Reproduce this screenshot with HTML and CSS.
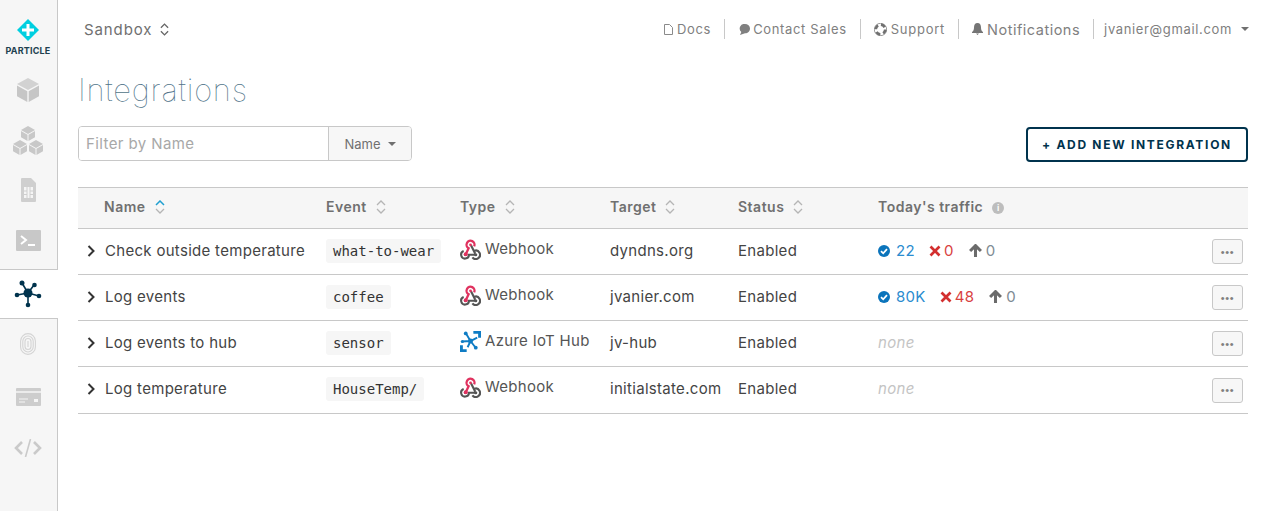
FILE: index.html
```html
<!DOCTYPE html>
<html lang="en">
<head>
    <meta charset="UTF-8">
    <meta name="viewport" content="width=device-width, initial-scale=1.0">
    <title>Integrations</title>
    <link rel="stylesheet" href="styles.css">
</head>
<body>
    <svg class="defs" width="0" height="0" aria-hidden="true">
        <symbol id="webhook" viewBox="0 0 20 20">
            <path d="M10.500 6 14.500 14" fill="none" stroke="#555" stroke-width="2"/>
            <path d="M13.500 11.300A4 4 0 1 1 11.800 17.400" fill="none" stroke="#555" stroke-width="2"/>
            <path d="M15 15H8.500A3.700 3.700 0 1 1 3.500 11.500" fill="none" stroke="#555" stroke-width="2"/>
            <circle cx="15" cy="15" r="1.500" fill="#555"/>
            <circle cx="5" cy="15" r="1.300" fill="#555"/>
            <path d="M5.500 14.500 8.200 8.800A3.800 3.800 0 1 1 13.500 7" fill="none" stroke="#e0325f" stroke-width="2.200"/>
            <circle cx="5.500" cy="14.500" r="1.900" fill="#e0325f"/>
            <circle cx="10" cy="5.500" r="1.300" fill="#e0325f"/>
        </symbol>
        <symbol id="azure" viewBox="0 0 22 22">
            <path d="M0 15h3v4h4v3H0zM14 0h8v7h-3V3h-5z" fill="#0f7cc4"/>
            <path d="M2 11 11 10.500M6 2 11 10.500 8 17M11 10.500 18 7M11 10.500 16 17" fill="none" stroke="#0f7cc4" stroke-width="2"/>
            <circle cx="11" cy="10.500" r="2.600" fill="#0f7cc4"/>
            <circle cx="6" cy="2.500" r="2" fill="#0f7cc4"/>
            <circle cx="16.500" cy="17.500" r="2" fill="#0f7cc4"/>
            <circle cx="2.500" cy="11" r="1.700" fill="#0f7cc4"/>
        </symbol>
        <symbol id="check" viewBox="0 0 12 12">
            <circle cx="6" cy="6" r="6" fill="#0b74bb"/>
            <path d="M3 6.200 5.200 8.300 9 4.200" fill="none" stroke="#fff" stroke-width="1.800"/>
        </symbol>
        <symbol id="cross" viewBox="0 0 12 12">
            <path d="M1.500 1.500 10.500 10.500M10.500 1.500 1.500 10.500" stroke="#d32f2f" stroke-width="2.700"/>
        </symbol>
        <symbol id="up" viewBox="0 0 12 12">
            <path d="M6 12V2M1 6.500 6 1.500 11 6.500" fill="none" stroke="#6b6b6b" stroke-width="2.800"/>
        </symbol>
        <symbol id="sort" viewBox="0 0 10 14">
            <path d="M1 5 5 1 9 5M1 9 5 13 9 9" fill="none" stroke="#b5b5b5" stroke-width="1.300"/>
        </symbol>
        <symbol id="sort-up" viewBox="0 0 10 14">
            <path d="M1 5 5 1 9 5" fill="none" stroke="#1f9fd0" stroke-width="1.500"/>
            <path d="M1 9 5 13 9 9" fill="none" stroke="#b5b5b5" stroke-width="1.300"/>
        </symbol>
        <symbol id="expand" viewBox="0 0 9 12">
            <path d="M1.500 1 6.500 6 1.500 11" fill="none" stroke="#333" stroke-width="2"/>
        </symbol>
    </svg>

    <div class="app">
        <nav class="sidebar">
            <div class="logo">
                <svg width="22" height="22" viewBox="0 0 22 22"><path d="M11 0 22 11 11 22 0 11z" fill="#00cfe0"/><path d="M9.500 5h3v4.500H17v3h-4.500V17h-3v-4.500H5v-3h4.500z" fill="#fff"/></svg>
                <span>PARTICLE</span>
            </div>
            <a class="nav-item">
                <svg width="22" height="24" viewBox="0 0 22 24"><path d="M11 0 22 6 11 12 0 6z" fill="#d2d2d2"/><path d="M0 7.500 10.300 13.200V24L0 18.300zM22 7.500 11.700 13.200V24L22 18.300z" fill="#c6c6c6"/></svg>
            </a>
            <a class="nav-item">
                <svg width="30" height="29" viewBox="0 0 30 29"><g fill="#c8c8c8"><path d="M15 0 22 4 15 8 8 4zM8 5 14.500 8.700V15L8 11.300zM22 5 15.500 8.700V15L22 11.300z"/><path d="M7 14 14 18 7 22 0 18zM0 19 6.500 22.700V29L0 25.300zM14 19 7.500 22.700V29L14 25.300z"/><path d="M23 14 30 18 23 22 16 18zM16 19 22.500 22.700V29L16 25.300zM30 19 23.500 22.700V29L30 25.300z"/></g></svg>
            </a>
            <a class="nav-item">
                <svg width="15" height="24" viewBox="0 0 15 24"><path d="M0 1a1 1 0 0 1 1-1h9l5 5v18a1 1 0 0 1-1 1H1a1 1 0 0 1-1-1z" fill="#cfcfcf"/><path d="M3 9h9v11H3z" fill="#f5f5f5"/><path d="M6 9v11M9 9v11M3 13h3M9 13h3M3 16.500h3M9 16.500h3" stroke="#cfcfcf"/></svg>
            </a>
            <a class="nav-item">
                <svg width="25" height="21" viewBox="0 0 25 21"><rect width="25" height="21" rx="1" fill="#c8c8c8"/><path d="M5 6 10 10 5 14" fill="none" stroke="#fff" stroke-width="2"/><path d="M12 15h7" stroke="#fff" stroke-width="2"/></svg>
            </a>
            <a class="nav-item active">
                <svg width="28" height="28" viewBox="0 0 28 28"><g stroke="#00334d" stroke-width="1.600"><path d="M14 13 8 3M14 13 20 5M14 13 3 15M14 13 25 16M14 13V25"/></g><g fill="#00334d"><circle cx="14" cy="13" r="4.500"/><circle cx="8" cy="3" r="2.500"/><circle cx="20.500" cy="5" r="2.300"/><circle cx="3" cy="15" r="2.300"/><circle cx="25" cy="16" r="2.300"/><circle cx="14" cy="25" r="2.300"/></g></svg>
            </a>
            <a class="nav-item">
                <svg width="16" height="22" viewBox="0 0 16 22"><g fill="none" stroke="#d4d4d4" stroke-width="1.100"><rect x=".6" y=".6" width="14.800" height="20.800" rx="7.400"/><rect x="2.800" y="3" width="10.400" height="16" rx="5.200"/><rect x="5" y="5.500" width="6" height="11" rx="3"/><path d="M8 8v6"/></g></svg>
            </a>
            <a class="nav-item card">
                <svg width="25" height="18" viewBox="0 0 25 18"><rect width="25" height="18" rx="1" fill="#cdcdcd"/><path d="M0 4h25" stroke="#f5f5f5" stroke-width="1.500"/><path d="M3 11h9M3 14h6" stroke="#f5f5f5"/><rect x="18" y="11" width="4" height="3" fill="#f5f5f5"/></svg>
            </a>
            <a class="nav-item code">
                <svg width="28" height="18" viewBox="0 0 28 18"><g fill="none" stroke="#cacaca" stroke-width="2.600"><path d="M8 3 2 9 8 15M20 3 26 9 20 15"/><path d="M16.500 0 11.500 18" stroke-width="1.600"/></g></svg>
            </a>
        </nav>

        <main class="main">
            <header class="topbar">
                <div class="org">Sandbox
                    <svg width="9" height="13" viewBox="0 0 10 14"><path d="M1 5 5 1 9 5M1 9 5 13 9 9" fill="none" stroke="#666" stroke-width="1.500"/></svg>
                </div>
                <ul class="links">
                    <li><svg width="9" height="11" viewBox="0 0 9 11"><path d="M.5.5h5l3 3v7h-8z" fill="none" stroke="#8a8a8a"/></svg>Docs</li>
                    <li class="contact"><svg width="12" height="11" viewBox="0 0 12 11"><path d="M7 0a5 4.600 0 0 1 5 4.600c0 3-2.500 4.900-5 4.700L2 11l1.300-3A4.600 4.600 0 0 1 7 0z" fill="#808080"/></svg>Contact Sales</li>
                    <li class="support"><svg width="13" height="13" viewBox="0 0 13 13"><circle cx="6.500" cy="6.500" r="4.800" fill="none" stroke="#707070" stroke-width="2.800" stroke-dasharray="4.500 3"/><circle cx="6.500" cy="6.500" r="6.200" fill="none" stroke="#707070" stroke-width=".7"/></svg>Support</li>
                    <li class="notif"><svg width="11" height="12" viewBox="0 0 11 12"><path d="M5.500 0C8 0 9 2 9 4.500c0 2 .6 3.500 2 4.500v1H0V9c1.400-1 2-2.500 2-4.500C2 2 3 0 5.500 0zM4 10.500h3L5.500 12z" fill="#757575"/></svg>Notifications</li>
                    <li class="account">jvanier@gmail.com<i class="caret"></i></li>
                </ul>
            </header>

            <h1 class="title">Integrations</h1>

            <div class="toolbar">
                <div class="filter">
                    <input type="text" placeholder="Filter by Name">
                    <button type="button">Name<i class="caret"></i></button>
                </div>
                <button type="button" class="add-btn">+ ADD NEW INTEGRATION</button>
            </div>

            <table class="grid">
                <thead>
                    <tr>
                        <th class="c-name"><span class="th-name">Name</span><svg class="sort"><use href="#sort-up"/></svg></th>
                        <th class="c-event">Event<svg class="sort"><use href="#sort"/></svg></th>
                        <th class="c-type">Type<svg class="sort"><use href="#sort"/></svg></th>
                        <th class="c-target">Target<svg class="sort"><use href="#sort"/></svg></th>
                        <th class="c-status">Status<svg class="sort"><use href="#sort"/></svg></th>
                        <th class="c-traffic">Today's traffic<i class="info">i</i></th>
                        <th class="c-actions"></th>
                    </tr>
                </thead>
                <tbody>
                    <tr>
                        <td><svg class="expand"><use href="#expand"/></svg>Check outside temperature</td>
                        <td><code>what-to-wear</code></td>
                        <td><div class="type"><svg class="type-icon"><use href="#webhook"/></svg>Webhook</div></td>
                        <td>dyndns.org</td>
                        <td>Enabled</td>
                        <td>
                            <div class="traffic">
                                <span class="ok"><svg><use href="#check"/></svg>22</span>
                                <span class="err"><svg><use href="#cross"/></svg>0</span>
                                <span class="out"><svg><use href="#up"/></svg>0</span>
                            </div>
                        </td>
                        <td class="actions"><button type="button" class="more">•••</button></td>
                    </tr>
                    <tr>
                        <td><svg class="expand"><use href="#expand"/></svg>Log events</td>
                        <td><code>coffee</code></td>
                        <td><div class="type"><svg class="type-icon"><use href="#webhook"/></svg>Webhook</div></td>
                        <td>jvanier.com</td>
                        <td>Enabled</td>
                        <td>
                            <div class="traffic">
                                <span class="ok"><svg><use href="#check"/></svg>80K</span>
                                <span class="err"><svg><use href="#cross"/></svg>48</span>
                                <span class="out"><svg><use href="#up"/></svg>0</span>
                            </div>
                        </td>
                        <td class="actions"><button type="button" class="more">•••</button></td>
                    </tr>
                    <tr>
                        <td><svg class="expand"><use href="#expand"/></svg>Log events to hub</td>
                        <td><code>sensor</code></td>
                        <td><div class="type"><svg class="type-icon"><use href="#azure"/></svg>Azure IoT Hub</div></td>
                        <td>jv-hub</td>
                        <td>Enabled</td>
                        <td class="none">none</td>
                        <td class="actions"><button type="button" class="more">•••</button></td>
                    </tr>
                    <tr class="last">
                        <td><svg class="expand"><use href="#expand"/></svg>Log temperature</td>
                        <td><code>HouseTemp/</code></td>
                        <td><div class="type"><svg class="type-icon"><use href="#webhook"/></svg>Webhook</div></td>
                        <td>initialstate.com</td>
                        <td>Enabled</td>
                        <td class="none">none</td>
                        <td class="actions"><button type="button" class="more">•••</button></td>
                    </tr>
                </tbody>
            </table>
        </main>
    </div>
</body>
</html>
```

FILE: styles.css
```css
* { box-sizing: border-box; }
html, body { height: 100%; }
body {
    margin: 0;
    font-family: "Inter", "Liberation Sans", sans-serif;
    color: #444;
    background: #fff;
}
.defs { position: absolute; }
.app {
    display: flex;
    min-height: 100%;
}

/* sidebar */
.sidebar {
    width: 58px;
    flex: none;
    background: #f6f6f6;
    border-right: 1px solid #c8c8c8;
    padding-top: 19px;
}
.logo {
    display: flex;
    flex-direction: column;
    align-items: center;
    gap: 4px;
    height: 46px;
    padding-right: 1px;
}
.logo span {
    font-size: 9px;
    font-weight: 700;
    color: #21404f;
    letter-spacing: 0.2px;
}
.nav-item {
    display: flex;
    align-items: center;
    justify-content: center;
    height: 50px;
    padding-right: 1px;
}
.nav-item.active {
    margin-top: 4px;
    margin-right: -1px;
    padding-right: 2px;
    background: #fff;
    border-top: 1px solid #c8c8c8;
    border-bottom: 1px solid #c8c8c8;
}
.nav-item.card { margin-top: 3px; }
.nav-item.code { margin-top: 1px; }

/* main */
.main {
    flex: 1;
    padding: 0 34px 0 20px;
    min-width: 0;
}
.topbar {
    display: flex;
    justify-content: space-between;
    align-items: center;
    height: 58px;
}
.org {
    display: flex;
    align-items: center;
    gap: 8px;
    margin-left: 6px;
    font-size: 15px;
    letter-spacing: 0.9px;
    color: #707070;
}
.links {
    display: flex;
    align-items: center;
    list-style: none;
    margin: 0 -1px 0 0;
    padding: 0;
    font-size: 13px;
    letter-spacing: 0.65px;
    color: #808080;
}
.links li {
    display: flex;
    align-items: center;
    gap: 4px;
    height: 20px;
    padding: 0 13px;
    border-left: 1px solid #c8c8c8;
}
.links li:first-child { border-left: 0; }
.links .contact { gap: 3px; }
.links .support { letter-spacing: 0.75px; }
.links .notif { font-size: 14.500px; letter-spacing: 0.5px; }
.links .account { padding-right: 0; padding-left: 10px; }
.account .caret { margin-left: 5px; }
.caret {
    display: inline-block;
    width: 0;
    height: 0;
    margin-left: 9px;
    border-left: 4px solid transparent;
    border-right: 4px solid transparent;
    border-top: 4px solid #707070;
}
.title {
    margin: 14px 0 0;
    font-size: 31px;
    line-height: 36px;
    font-weight: 100;
    letter-spacing: 0.75px;
    color: #4f7388;
}
.toolbar {
    display: flex;
    justify-content: space-between;
    align-items: flex-start;
    margin-top: 18px;
}
.filter {
    display: flex;
    width: 334px;
    height: 35px;
    border: 1px solid #c8c8c8;
    border-radius: 4px;
    overflow: hidden;
}
.filter input {
    flex: 1;
    min-width: 0;
    border: 0;
    outline: 0;
    padding: 0 7px;
    font: inherit;
    font-size: 15px;
    letter-spacing: 0.4px;
}
.filter input::placeholder { color: #a8a8a8; }
.filter button {
    display: flex;
    align-items: center;
    justify-content: center;
    width: 83px;
    border: 0;
    border-left: 1px solid #c8c8c8;
    background: #f7f7f7;
    font: inherit;
    font-size: 13px;
    color: #707070;
}
.filter .caret { margin-left: 7px; }
.add-btn {
    width: 222px;
    height: 35px;
    margin-top: 1px;
    border: 2px solid #00334d;
    border-radius: 4px;
    background: #fff;
    font: inherit;
    font-size: 12px;
    font-weight: 700;
    letter-spacing: 1.700px;
    color: #00334d;
}

/* table */
.grid {
    width: 100%;
    margin-top: 25px;
    border-collapse: collapse;
    table-layout: fixed;
    font-size: 15px;
    letter-spacing: 0.3px;
}
.grid th {
    height: 41px;
    padding: 0 0 4px;
    background: #f6f6f6;
    border-top: 1px solid #c8c8c8;
    border-bottom: 1px solid #c8c8c8;
    text-align: left;
    font-size: 14px;
    font-weight: 600;
    letter-spacing: 0.5px;
    color: #707070;
}
.grid td {
    height: 46px;
    padding: 0 0 2px;
    border-bottom: 1px solid #c8c8c8;
    color: #444;
}
.grid .last td { height: 47px; padding-bottom: 3px; }
.c-name { width: 248px; }
.c-event { width: 134px; }
.c-type { width: 150px; }
.c-target { width: 128px; }
.c-status { width: 140px; }
.c-actions { width: 40px; }
.th-name { margin-left: 26px; }
.sort {
    width: 10px;
    height: 14px;
    margin-left: 9px;
    vertical-align: -2px;
}
.info {
    display: inline-block;
    width: 12px;
    height: 12px;
    margin-left: 9px;
    border-radius: 50%;
    background: #bdbdbd;
    color: #fff;
    font-size: 9px;
    line-height: 12px;
    letter-spacing: 0;
    text-align: center;
    font-style: normal;
    vertical-align: 1px;
}
.expand {
    width: 9px;
    height: 12px;
    margin: 0 9px 0 9px;
    vertical-align: -1px;
}
code {
    display: inline-block;
    padding: 2px 7px;
    border-radius: 3px;
    background: #f6f6f6;
    font-family: "DejaVu Sans Mono", monospace;
    font-size: 14px;
    line-height: 20px;
    letter-spacing: 0;
    color: #333;
}
.type {
    display: flex;
    align-items: flex-start;
    gap: 4px;
    margin-top: -3px;
    color: #555;
}
.type-icon {
    width: 21px;
    height: 21px;
    flex: none;
}
.traffic {
    display: flex;
    gap: 14px;
}
.traffic span {
    display: flex;
    align-items: center;
    gap: 3px;
}
.traffic .ok { gap: 6px; }
.traffic .out { gap: 4px; margin-left: 1px; }
.traffic svg {
    width: 12px;
    height: 12px;
}
.traffic .out svg { width: 13px; height: 13px; }
.ok { color: #2b8ccf; }
.err { color: #d9423f; }
.out { color: #808b94; }
.grid td.none {
    font-style: italic;
    color: #c4c4c4;
}
.grid .last td.actions,
.grid td.actions { padding: 0 5px 0 0; text-align: right; }
.more {
    width: 31px;
    height: 25px;
    padding: 0;
    border: 1px solid #c8c8c8;
    border-radius: 3px;
    background: #f7f7f7;
    font-family: "Liberation Sans", sans-serif;
    font-size: 11px;
    letter-spacing: 0.6px;
    color: #808080;
}
```
